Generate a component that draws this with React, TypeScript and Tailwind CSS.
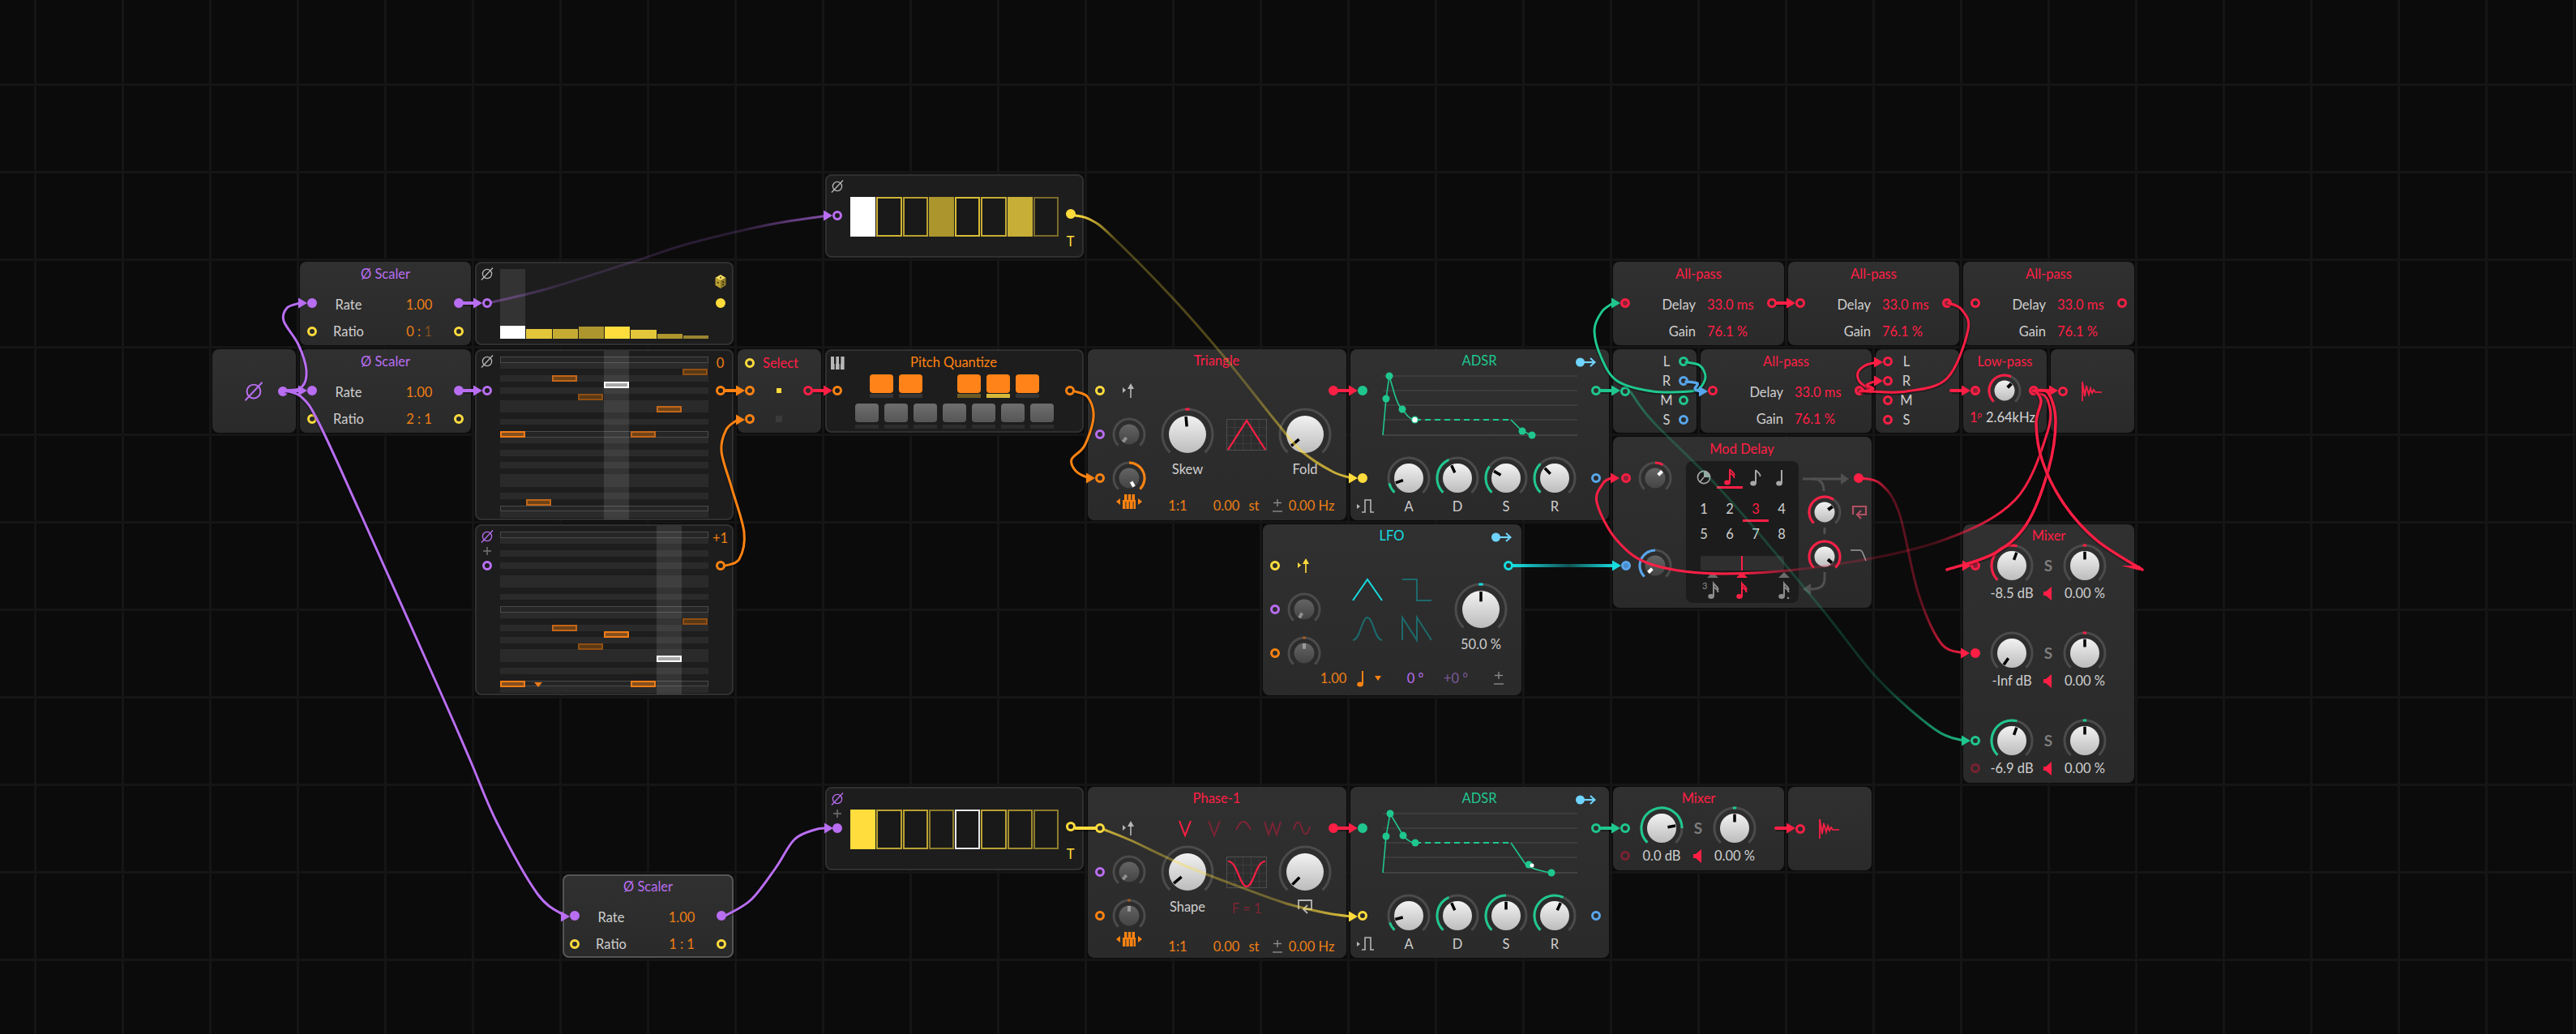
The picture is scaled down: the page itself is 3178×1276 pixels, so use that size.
import React from "react";

const RED = "#ff1f45", GRN = "#1fc78f", BLU = "#58a6ec", PUR = "#b96ef2", ORG = "#ff8312", YEL = "#ffdc3c", CYA = "#17dde0";

type PortKind = "red" | "redMid" | "redFill" | "redDim" | "grn" | "grnFill" | "blu" | "bluFill" | "pur" | "purFill" | "org" | "yel" | "yelFill" | "cya";
const PORT: Record<PortKind, string> = {
  red: "border-[#ff1f45]",
  redMid: "border-[#ff1f45] bg-[#8a2236]",
  redFill: "border-[#ff1f45] bg-[#ff1f45]",
  redDim: "border-[#7a2232]",
  grn: "border-[#1fc78f]",
  grnFill: "border-[#1fc78f] bg-[#1fc78f]",
  blu: "border-[#58a6ec]",
  bluFill: "border-[#58a6ec] bg-[#4a8dca]",
  pur: "border-[#b96ef2]",
  purFill: "border-[#b96ef2] bg-[#b96ef2]",
  org: "border-[#ff8312]",
  yel: "border-[#ffdc3c]",
  yelFill: "border-[#ffdc3c] bg-[#ffdc3c]",
  cya: "border-[#17dde0]",
};

const Port = ({ k }: { k: PortKind }) => (
  <span className={"block h-[12px] w-[12px] shrink-0 rounded-full border-[3px] " + PORT[k]} />
);
const PortCell = ({ k, className = "w-[30px]" }: { k: PortKind; className?: string }) => (
  <div className={"flex shrink-0 items-center justify-center " + className}>
    <Port k={k} />
  </div>
);

const Node = ({ c, r, w, h, dark, className = "", children }: { c: number; r: number; w: number; h: number; dark?: boolean; className?: string; children?: React.ReactNode }) => (
  <div
    className={
      "absolute rounded-[8px] " +
      (dark ? "bg-[#1d1d1d] shadow-[inset_0_0_0_2px_#303030] " : "bg-linear-to-b from-[#303030] to-[#2a2a2a] ") +
      className
    }
    style={{ left: 262 + 108 * c, top: 215 + 108 * r, width: 108 * w - 5, height: 108 * h - 5 }}
  >
    {children}
  </div>
);

const rad = (a: number) => (a * Math.PI) / 180;
const pol = (c: number, r: number, a: number): [number, number] => [c + r * Math.sin(rad(a)), c - r * Math.cos(rad(a))];
const arcD = (c: number, r: number, a0: number, a1: number) => {
  const [x0, y0] = pol(c, r, a0);
  const [x1, y1] = pol(c, r, a1);
  return `M${x0.toFixed(2)} ${y0.toFixed(2)}A${r} ${r} 0 ${a1 - a0 > 180 ? 1 : 0} 1 ${x1.toFixed(2)} ${y1.toFixed(2)}`;
};

const KN = { L: [66, 46], M: [54, 36], S: [42, 25] } as const;
const Knob = ({ s = "M", a, arc, col = RED, tick, dark, pc }: { s?: "L" | "M" | "S"; a: number; arc?: [number, number]; col?: string; tick?: string; dark?: boolean; pc?: string }) => {
  const [d, kd] = KN[s];
  const c = d / 2;
  const tr = c - 2;
  const kr = kd / 2;
  const [x0, y0] = pol(c, kr * 0.42, a);
  const [x1, y1] = pol(c, kr * 0.96, a);
  return (
    <svg width={d} height={d} className="block shrink-0">
      <path d={arcD(c, tr, -136, 136)} fill="none" stroke="#4b4b4b" strokeWidth={3} />
      {arc && <path d={arcD(c, tr, arc[0], arc[1])} fill="none" stroke={col} strokeWidth={3} />}
      {tick && <path d={arcD(c, tr, -5, 5)} fill="none" stroke={tick} strokeWidth={3} />}
      <circle cx={c} cy={c} r={kr} fill={dark ? "url(#kd)" : "url(#kl)"} />
      <line x1={x0} y1={y0} x2={x1} y2={y1} stroke={pc || (dark ? "#ffffff" : "#000000")} strokeWidth={s === "S" ? 4 : 3.5} />
    </svg>
  );
};

const Phi = ({ col = "#b8b8b8", z = 16 }: { col?: string; z?: number }) => (
  <svg width={z} height={z} viewBox="0 0 16 16" className="block shrink-0" fill="none" stroke={col} strokeWidth={1.3}>
    <circle cx="8" cy="8" r="5.6" />
    <line x1="1" y1="15.5" x2="15" y2="0.5" />
  </svg>
);
const Plus = () => (
  <svg width="10" height="10" className="block" stroke="#6e6e6e" strokeWidth="1.6">
    <line x1="5" y1="0" x2="5" y2="10" />
    <line x1="0" y1="5" x2="10" y2="5" />
  </svg>
);
const Retrig = ({ col = "#b5b5b5" }: { col?: string }) => (
  <svg width="16" height="18" className="block" fill={col}>
    <polygon points="0,5 4,8.5 0,12" />
    <polygon points="10,0 14,7 6,7" />
    <rect x="9.2" y="6" width="1.6" height="12" />
  </svg>
);
const GateIcon = () => (
  <svg width="22" height="18" fill="none" className="block">
    <polygon points="0,6 4,9 0,12" fill="#b5b5b5" />
    <path d="M6 16H10V1H17V16H21" stroke="#b5b5b5" strokeWidth="1.6" />
  </svg>
);
const KeysIcon = () => (
  <svg width="32" height="18" className="block" fill={ORG}>
    <polygon points="0,9 5,5 5,13" />
    <polygon points="32,9 27,5 27,13" />
    <rect x="8" y="7" width="16" height="11" />
    <rect x="10" y="0" width="3.4" height="11" />
    <rect x="14.8" y="0" width="3.4" height="11" />
    <rect x="19.6" y="0" width="3.4" height="11" />
    <rect x="11.4" y="9" width="1" height="9" fill="#2d2d2d" />
    <rect x="15.8" y="9" width="1" height="9" fill="#2d2d2d" />
    <rect x="20.6" y="9" width="1" height="9" fill="#2d2d2d" />
  </svg>
);
const PlusMinus = ({ col = "#8c8c8c" }: { col?: string }) => (
  <svg width="14" height="17" stroke={col} strokeWidth="1.4" className="block">
    <line x1="7" y1="0" x2="7" y2="9" />
    <line x1="2" y1="4.5" x2="12" y2="4.5" />
    <line x1="1" y1="15" x2="13" y2="15" />
  </svg>
);
const OutArrow = () => (
  <svg width="26" height="14" className="block" fill="none" stroke="#6fd4ff">
    <circle cx="6.5" cy="7" r="5.5" fill="#6fd4ff" stroke="none" />
    <line x1="10" y1="7" x2="24" y2="7" strokeWidth="2.2" />
    <path d="M19 2L24.5 7L19 12" strokeWidth="2" />
    <line x1="25" y1="1" x2="25" y2="13" strokeWidth="0" />
  </svg>
);
const Speaker = () => (
  <svg width="12" height="17" className="block" fill={RED}>
    <polygon points="10,0 10,17 3,11 0,11 0,6 3,6" />
  </svg>
);
const Decay = () => (
  <svg width="26" height="26" fill="none" stroke={RED} strokeWidth="1.7" className="block">
    <path d="M1 25V1L4 19L6 6L9 17L11 9L13 15L15 11L17 14H25" />
  </svg>
);
const Piano = () => (
  <svg width="17" height="16" className="block" fill="#b8b8b8">
    <rect x="0" y="0" width="4.6" height="16" />
    <rect x="6" y="0" width="4.6" height="16" />
    <rect x="12" y="0" width="4.6" height="16" />
    <rect x="4" y="0" width="2.4" height="9" fill="#1d1d1d" />
    <rect x="10" y="0" width="2.4" height="9" fill="#1d1d1d" />
  </svg>
);
const Dice = () => (
  <svg width="16" height="17" viewBox="0 0 18 21" className="block">
    <polygon points="9,0 17,4.5 9,9 1,4.5" fill="#ffe061" />
    <polygon points="1,4.5 9,9 9,21 1,16" fill="#b99f33" />
    <polygon points="17,4.5 9,9 9,21 17,16" fill="#8f7a28" />
    <circle cx="9" cy="4.5" r="1.3" fill="#5f5118" />
    <circle cx="5" cy="12" r="1.2" fill="#2e2708" />
    <circle cx="13" cy="11" r="1.2" fill="#2e2708" />
    <circle cx="13" cy="15" r="1.2" fill="#2e2708" />
  </svg>
);
const Note = ({ flags = 0, col = "#a8a8a8", dot }: { flags?: number; col?: string; dot?: boolean }) => (
  <svg width="18" height="24" className="block" fill="none" stroke={col} strokeWidth="2">
    <ellipse cx="6" cy="19.5" rx="3.8" ry="3" fill={col} stroke="none" />
    <line x1="9" y1="19" x2="9" y2="3" />
    {flags > 0 && <path d="M9 3C11 6 15 7 14.5 11" strokeWidth="1.8" />}
    {flags > 1 && <path d="M9 7C11 10 15 10 14.5 14" strokeWidth="1.6" />}
    {dot && <circle cx="15" cy="21" r="1.3" fill={col} stroke="none" />}
  </svg>
);

const T = "text-[16.5px] leading-[20px] whitespace-nowrap";

const Title = ({ className, children, h = "h-[28px]" }: { className: string; children: React.ReactNode; h?: string }) => (
  <div className={"flex items-center justify-center " + h + " " + T + " " + className}>{children}</div>
);

/* ---------------- simple modules ---------------- */
const Scaler = ({ c, r, ratio, dim, outline }: { c: number; r: number; ratio: React.ReactNode; dim?: boolean; outline?: boolean }) => (
  <Node c={c} r={r} w={2} h={1} className={outline ? "shadow-[inset_0_0_0_2px_#555]" : ""}>
    <Title h="h-[33px]" className="pb-[4px] text-[#b96ef2]">Ø Scaler</Title>
    <div className="flex h-[36px] items-center">
      <PortCell k="purFill" />
      <div className={"mt-[3px] w-[60px] text-center text-[#cfcfcf] " + T}>Rate</div>
      <div className={"ml-[27px] mt-[3px] w-[60px] text-center text-[#ed7f16] " + T}>1.00</div>
      <PortCell k={dim ? "pur" : "purFill"} className="ml-auto w-[30px]" />
    </div>
    <div className="flex h-[34px] items-center">
      <PortCell k="yel" />
      <div className={"w-[60px] text-center text-[#cfcfcf] " + T}>Ratio</div>
      <div className={"ml-[27px] w-[60px] text-center text-[#ed7f16] " + T}>{ratio}</div>
      <PortCell k="yel" className="ml-auto w-[30px]" />
    </div>
  </Node>
);

const rowKind = (i: number) => {
  const m = i % 12;
  if (m === 0) return "box";
  return [1, 3, 5, 7, 8, 10].includes(m) ? "stripe" : "none";
};
const ROWS = Array.from({ length: 26 }, (_, i) => i);
type N = { c: number; r: number; s: "hi" | "mid" | "lo" | "w" };
const NOTE: Record<N["s"], string> = {
  hi: "border-[#ef7c18] bg-[#85501e]",
  mid: "border-[#c2661a] bg-[#704317]",
  lo: "border-[#8f4f14] bg-[#5a3814]",
  w: "border-white bg-[#a9a9a9]",
};
const Roll = ({ notes, play, marker }: { notes: N[]; play: number; marker?: boolean }) => (
  <div className="relative mt-[9px] h-[199px] w-[257px] shrink-0">
    {ROWS.map((i) => (
      <div
        key={i}
        className={
          "h-[7.667px] " +
          (rowKind(i) === "stripe" ? "bg-[#2a2a2a]" : rowKind(i) === "box" ? "border border-[#4a4a4a] bg-[#252525]" : "")
        }
      />
    ))}
    <div className="absolute top-[-7px] bottom-[-2px] w-[31px] bg-white/10" style={{ left: play * 32.1 }} />
    {notes.map((n, i) => (
      <div
        key={i}
        className={"absolute h-[8px] w-[31px] border-2 " + NOTE[n.s]}
        style={{ left: n.c * 32.1, top: n.r * 7.667 }}
      />
    ))}
    {marker && (
      <svg width="10" height="6" className="absolute left-[42px] top-[186px]">
        <polygon points="0,0 10,0 5,6" fill="#e87a1a" />
      </svg>
    )}
  </div>
);

const Side = ({ phi, plus, port }: { phi: string; plus?: boolean; port: PortKind }) => (
  <div className="flex w-[31px] shrink-0 flex-col items-center pr-[1px]">
    <div className="flex h-[30px] items-center"><Phi col={phi} /></div>
    <div className="flex h-[6px] items-center">{plus && <Plus />}</div>
    <div className="flex h-[30px] items-center"><Port k={port} /></div>
  </div>
);

const NoteSeq = ({ c, r, label, phi, plus, inPort, notes, play, marker }: { c: number; r: number; label: string; phi: string; plus?: boolean; inPort: PortKind; notes: N[]; play: number; marker?: boolean }) => (
  <Node c={c} r={r} w={3} h={2} dark className="flex">
    <Side phi={phi} plus={plus} port={inPort} />
    <Roll notes={notes} play={play} marker={marker} />
    <div className="flex w-[29px] flex-col items-center">
      <div className={"flex h-[33px] items-center text-[#ed7f16] " + T}>{label}</div>
      <div className="flex h-[6px]" />
      <div className="-mt-[3px] flex h-[30px] items-center"><Port k="org" /></div>
    </div>
  </Node>
);

const BARS = [
  { h: 16, c: "bg-white" }, { h: 12, c: "bg-[#e3c63a]" }, { h: 12, c: "bg-[#c6ab33]" }, { h: 15, c: "bg-[#ad962e]" },
  { h: 15, c: "bg-[#ffdd3c]" }, { h: 11, c: "bg-[#e3c63a]" }, { h: 6, c: "bg-[#ad962e]" }, { h: 4, c: "bg-[#998530]" },
];
const ModSeq = () => (
  <Node c={3} r={1} w={3} h={1} dark className="flex">
    <Side phi="#b8b8b8" port="pur" />
    <div className="mt-[9px] flex h-[86px] w-[257px] shrink-0 items-end gap-[1px]">
      {BARS.map((b, i) => (
        <div key={i} className={"flex h-full flex-1 items-end " + (i === 0 ? "bg-[#333333]" : "")}>
          <div className={"w-full " + b.c} style={{ height: b.h }} />
        </div>
      ))}
    </div>
    <div className="flex w-[29px] flex-col items-center">
      <div className="flex h-[36px] items-center pt-[12px]"><Dice /></div>
      <div className="flex h-[30px] items-center"><Port k="yelFill" /></div>
    </div>
  </Node>
);

type Step = { f?: string; b?: string };
const StepSeq = ({ c, r, phi, plus, inPort, outPort, steps }: { c: number; r: number; phi: string; plus?: boolean; inPort: PortKind; outPort: PortKind; steps: Step[] }) => (
  <Node c={c} r={r} w={3} h={1} dark className="flex">
    <Side phi={phi} plus={plus} port={inPort} />
    <div className="mt-[28px] flex h-[49px] w-[257px] shrink-0 gap-[1px]">
      {steps.map((s, i) => (
        <div key={i} className="flex-1 border-2 bg-[#191919]" style={{ background: s.f, borderColor: s.b || s.f }} />
      ))}
    </div>
    <div className="flex w-[29px] flex-col items-center">
      <div className="h-[36px]" />
      <div className="flex h-[30px] items-center"><Port k={outPort} /></div>
      <div className={"flex h-[42px] items-center text-[#ffdc3c] " + T}>T</div>
    </div>
  </Node>
);

const Select = () => (
  <Node c={6} r={2} w={1} h={1}>
    <div className="flex h-[33px] items-center">
      <PortCell k="yel" />
      <div className={"w-[46px] text-center text-[#ff1f45] " + T}>Select</div>
    </div>
    <div className="flex h-[36px] items-center">
      <PortCell k="org" />
      <div className="flex w-[42px] justify-center"><span className="h-[6px] w-[6px] bg-[#ffdc3c]" /></div>
      <PortCell k="red" />
    </div>
    <div className="flex h-[34px] items-center">
      <PortCell k="org" />
      <div className="flex w-[42px] justify-center"><span className="h-[8px] w-[8px] bg-[#3a3a3a]" /></div>
    </div>
  </Node>
);

const PitchQ = () => {
  const on = [0, 1, -1, 3, 4, 5];
  const ind = ["bg-[#353535]", "bg-[#353535]", "", "bg-[#6b5a25]", "bg-[#d4b83a]", "bg-[#353535]"];
  return (
    <Node c={7} r={2} w={3} h={1} dark className="grid grid-cols-[30px_257px_30px] grid-rows-[31px_72px]">
      <div className="col-start-1 row-start-1 flex items-center justify-center pt-[2px]"><Piano /></div>
      <Title h="h-[31px]" className="col-span-3 col-start-1 row-start-1 text-[#ff8312]">Pitch Quantize</Title>
      <div className="col-start-1 row-start-2 flex h-[40px] items-center justify-center"><Port k="org" /></div>
      <div className="col-start-2 row-start-2 flex flex-col">
        <div className="flex gap-[7px] pl-[25px]">
          {on.map((v, i) => (
            <div key={i} className="flex w-[29px] flex-col gap-[1px]">
              <div className={"h-[23px] rounded-[4px] " + (v < 0 ? "" : "bg-[#ff8318]")} />
              <div className={"h-[5px] " + ind[i]} />
            </div>
          ))}
        </div>
        <div className="mt-[7px] flex gap-[7px] pl-[7px]">
          {[0, 1, 2, 3, 4, 5, 6].map((i) => (
            <div key={i} className="flex w-[29px] flex-col gap-[3px]">
              <div className="h-[23px] rounded-[4px] bg-linear-to-b from-[#6e6e6e] to-[#565656]" />
              <div className="h-[5px] bg-[#2c2c2c]" />
            </div>
          ))}
        </div>
      </div>
      <div className="col-start-3 row-start-2 flex h-[40px] items-center justify-center"><Port k="org" /></div>
    </Node>
  );
};

const LeftBank = ({ a, b, top, keys }: { a: React.ReactNode; b: React.ReactNode; top: PortKind; keys?: boolean }) => (
  <div className="row-span-4 row-start-2 flex w-[72px] flex-col">
    <div className="flex h-[54px] items-center">
      <PortCell k={top} />
      <div className="flex w-[42px] justify-center"><Retrig col={keys ? "#b5b5b5" : YEL} /></div>
    </div>
    <div className="flex h-[54px] items-center">
      <PortCell k="pur" />
      {a}
    </div>
    <div className="flex h-[54px] items-center">
      <PortCell k="org" />
      {b}
    </div>
    {keys && <div className="-mt-[7px] flex h-[24px] justify-center pl-[30px]"><KeysIcon /></div>}
  </div>
);

const OscFoot = () => (
  <div className={"flex h-[18px] items-center text-[#ed7f16] " + T}>
    <div className="w-[78px] text-center">1:1</div>
    <div className="w-[42px] text-center">0.00</div>
    <div className="ml-[3px] w-[20px] text-center">st</div>
    <div className="ml-[10px] flex w-[18px] justify-center"><PlusMinus /></div>
    <div className="w-[66px] text-center">0.00 Hz</div>
  </div>
);

const Grid = ({ id }: { id: string }) => (
  <pattern id={id} width="10" height="10" patternUnits="userSpaceOnUse">
    <path d="M10 0H0V10" fill="none" stroke="#4a4a4a" strokeWidth="1" />
  </pattern>
);
const Shape = ({ d }: { d: string }) => (
  <svg width="50" height="40" fill="none" className="block">
    <rect x="0.5" y="0.5" width="49" height="38" fill="url(#gr)" stroke="#4f4f4f" />
    <path d={d} stroke={RED} strokeWidth="2.2" />
  </svg>
);

const Osc = ({ r, title, wave, sel, knobA, knobB, labelL, mid, right }: { r: number; title: string; wave: string; sel?: boolean; knobA: number; knobB: number; labelL: string; mid?: React.ReactNode; right: React.ReactNode }) => (
  <Node c={10} r={r} w={3} h={2} className="grid grid-cols-[72px_246px] grid-rows-[24px_54px_54px_54px_1fr]">
    <Title className="col-span-2 text-[#ff1f45]">{title}</Title>
    <LeftBank
      top="yel"
      keys
      a={<div className="flex w-[42px] justify-center"><Knob s="S" a={-140} dark pc="#8f8f8f" /></div>}
      b={sel
        ? <div className="flex w-[42px] justify-center"><Knob s="S" a={0} dark pc="#9a9a9a" tick="#a55c20" /></div>
        : <div className="flex w-[42px] justify-center"><Knob s="S" a={150} dark arc={[0, 135]} col={ORG} /></div>}
    />
    <div className="col-start-2 row-span-4 row-start-2 flex flex-col">
      <div className="flex h-[54px] items-center">
        {sel && (
          <div className="flex pl-[30px]">
            {[
              ["M5 3L12 21L19 3", RED],
              ["M5 3L12 21L19 3", "#7c2435"],
              ["M3 14C7 6 9 4 12 4C15 4 17 6 21 14", "#7c2435"],
              ["M2 4L7 20L12 6L17 20L22 4", "#7c2435"],
              ["M2 14C5 2 9 2 12 12C15 22 19 22 22 10", "#7c2435"],
            ].map(([d, c], i) => (
              <div key={i} className="flex w-[36px] justify-center">
                <svg width="24" height="24" fill="none" stroke={c} strokeWidth="2" className="block"><path d={d} /></svg>
              </div>
            ))}
          </div>
        )}
        <PortCell k="redFill" className="ml-auto w-[30px]" />
      </div>
      <div className="-mt-[6px] flex">
        <div className="ml-[18px] flex w-[66px] flex-col items-center">
          <Knob s="L" a={knobA} tick={sel ? undefined : RED} />
          <div className={"text-[#cfcfcf] " + T}>{labelL}</div>
        </div>
        <div className="ml-[15px] flex w-[50px] flex-col items-center">
          <div className="mt-[14px]"><Shape d={wave} /></div>
          <div className="mt-[12px]">{mid}</div>
        </div>
        <div className="ml-[14px] flex w-[66px] flex-col items-center">
          <Knob s="L" a={knobB} />
          <div className={"text-[#cfcfcf] " + T}>{right}</div>
        </div>
      </div>
      <div className="mt-[26px]"><OscFoot /></div>
    </div>
  </Node>
);

const Env = ({ curve, pts, dash, white, line }: { curve: string; pts: [number, number][]; dash: string; white: [number, number]; line: string }) => (
  <svg width="258" height="108" fill="none" className="block">
    {[9, 27, 45, 63].map((y) => <line key={y} x1="10" x2="250" y1={y} y2={y} stroke="#4b4b4b" strokeWidth="1.2" />)}
    <line x1="10" x2="250" y1="82" y2="82" stroke="#5a5a5a" strokeWidth="1.2" />
    <path d={line} stroke={GRN} strokeWidth="1.6" />
    <path d={curve} stroke={GRN} strokeWidth="1.6" />
    <path d={dash} stroke={GRN} strokeWidth="2" strokeDasharray="7 5" />
    {pts.map(([x, y], i) => <circle key={i} cx={x} cy={y} r="4.5" fill={GRN} />)}
    <circle cx={white[0]} cy={white[1]} r={white[1] > 70 ? 2.5 : 3.2} fill="#fff" />
  </svg>
);

const Adsr = ({ r, env, knobs, bPort }: { r: number; env: React.ReactNode; knobs: { a: number; t: number }[]; bPort?: PortKind }) => (
  <Node c={13} r={r} w={3} h={2} className="grid grid-cols-[30px_258px_30px] grid-rows-[24px_54px_54px_54px_1fr]">
    <div className="col-span-3 flex">
      <div className="w-[54px]" />
      <Title className="flex-1 text-[#1fc78f]">ADSR</Title>
      <div className="flex w-[54px] justify-end pr-[15px] pt-[9px]"><OutArrow /></div>
    </div>
    <PortCell k="grnFill" className="col-start-1 row-start-2 w-[30px]" />
    <div className="col-start-2 row-span-2 row-start-2">{env}</div>
    <PortCell k="grn" className="col-start-3 row-start-2 w-[30px]" />
    <PortCell k={bPort || "yelFill"} className="col-start-1 row-start-4 w-[30px]" />
    <div className="col-start-2 row-start-4 flex items-center pl-[12px]">
      {knobs.map((k, i) => (
        <div key={i} className="flex w-[60px] justify-center"><Knob a={k.a} arc={[-135, k.t]} col={GRN} /></div>
      ))}
    </div>
    <PortCell k="blu" className="col-start-3 row-start-4 w-[30px]" />
    <div className={"col-span-3 row-start-5 -mt-[2px] flex h-[20px] items-center text-[#cfcfcf] " + T}>
      <div className="ml-[8px] w-[34px]"><GateIcon /></div>
      {["A", "D", "S", "R"].map((l) => <div key={l} className="w-[60px] text-center">{l}</div>)}
    </div>
  </Node>
);

const AllPass = ({ c, r, inP, outP }: { c: number; r: number; inP: PortKind; outP?: PortKind }) => (
  <Node c={c} r={r} w={2} h={1}>
    <Title h="h-[33px]" className="pb-[4px] text-[#ff1f45]">All-pass</Title>
    <div className="flex h-[36px] items-center">
      <PortCell k={inP} />
      <div className={"mt-[3px] w-[72px] text-right text-[#cfcfcf] " + T}>Delay</div>
      <div className={"ml-[14px] mt-[3px] text-[#ff1f45] " + T}>33.0 ms</div>
      <PortCell k={outP || "red"} className="ml-auto w-[30px]" />
    </div>
    <div className="flex h-[34px] items-center">
      <div className="w-[30px]" />
      <div className={"w-[72px] text-right text-[#cfcfcf] " + T}>Gain</div>
      <div className={"ml-[14px] text-[#ff1f45] " + T}>76.1 %</div>
    </div>
  </Node>
);

const Split = () => (
  <Node c={16} r={2} w={1} h={1} className="flex">
    <div className="flex w-[30px] items-center justify-center"><Port k="grn" /></div>
    <div className="flex flex-col pt-[3px]">
      {([["L", "grn"], ["R", "blu"], ["M", "grn"], ["S", "blu"]] as [string, PortKind][]).map(([l, p]) => (
        <div key={l} className="flex h-[24px] items-center">
          <div className={"ml-[26px] w-[20px] text-center text-[#cfcfcf] " + T}>{l}</div>
          <PortCell k={p} className="w-[22px]" />
        </div>
      ))}
    </div>
  </Node>
);
const Merge = () => (
  <Node c={19} r={2} w={1} h={1}>
    <div className="flex flex-col pt-[3px]">
      {["L", "R", "M", "S"].map((l) => (
        <div key={l} className="flex h-[24px] items-center">
          <PortCell k="red" />
          <div className={"w-[16px] text-center text-[#cfcfcf] " + T}>{l}</div>
        </div>
      ))}
    </div>
  </Node>
);
const LowPass = () => (
  <Node c={20} r={2} w={1} h={1}>
    <Title h="h-[30px]" className="text-[#ff1f45]">Low-pass</Title>
    <div className="flex h-[42px] items-center">
      <PortCell k="redMid" />
      <div className="flex w-[42px] justify-center"><Knob s="S" a={45} arc={[-135, 25]} /></div>
      <PortCell k="redMid" />
    </div>
    <div className={"mt-[1px] flex h-[22px] items-center whitespace-nowrap pl-[8px] " + T}>
      <span className="text-[#ff1f45]">1<sup className="text-[9px]">P</sup></span>
      <span className="ml-[5px] text-[#d5d5d5]">2.64kHz</span>
    </div>
  </Node>
);
const Out = ({ c, r }: { c: number; r: number }) => (
  <Node c={c} r={r} w={1} h={1} className="flex items-center">
    <PortCell k="red" />
    <div className="ml-[8px]"><Decay /></div>
  </Node>
);

const MixRow = ({ inP, a, arc, col, tick, db, dim }: { inP: PortKind; a: number; arc?: [number, number]; col: string; tick: string; db: string; dim?: boolean }) => (
  <>
    <div className="flex h-[54px] items-center">
      <PortCell k={inP} />
      <div className="flex w-[60px] justify-center"><Knob a={a} arc={arc} col={col} /></div>
      <div className="flex w-[30px] justify-center text-[19px] font-bold text-[#7d7d7d]">S</div>
      <div className="flex w-[60px] justify-center"><Knob a={0} tick={tick} /></div>
    </div>
    <div className={"flex h-[14px] items-center text-[#cfcfcf] " + T}>
      {dim ? <PortCell k="redDim" /> : <div className="w-[30px]" />}
      <div className="flex w-[60px] justify-center">{db}</div>
      <div className="flex w-[30px] justify-center"><Speaker /></div>
      <div className="flex w-[60px] justify-center">0.00 %</div>
    </div>
  </>
);

const Mixer3 = () => (
  <Node c={20} r={4} w={2} h={3}>
    <Title h="h-[24px]" className="pt-[4px] text-[#ff1f45]">Mixer</Title>
    <MixRow inP="redMid" a={20} arc={[-135, 15]} col={RED} tick={RED} db="-8.5 dB" />
    <div className="h-[40px]" />
    <MixRow inP="redFill" a={-145} col={RED} tick={RED} db="-Inf dB" />
    <div className="h-[40px]" />
    <MixRow inP="grn" a={20} arc={[-135, 15]} col={GRN} tick={GRN} db="-6.9 dB" dim />
  </Node>
);
const Mixer1 = () => (
  <Node c={16} r={7} w={2} h={1}>
    <Title h="h-[24px]" className="pt-[4px] text-[#ff1f45]">Mixer</Title>
    <MixRow inP="grn" a={80} arc={[-135, 90]} col={GRN} tick={GRN} db="0.0 dB" dim />
  </Node>
);

const ModDelay = () => (
  <Node c={16} r={3} w={3} h={2} className="grid grid-cols-[32px_40px_18px_139px_89px] grid-rows-[30px_175px]">
    <Title h="h-[30px]" className="col-span-5 text-[#ff1f45]">Mod Delay</Title>
    <div className="col-span-2 row-start-2 flex flex-col">
      <div className="flex h-[42px] items-center">
        <PortCell k="redMid" className="w-[32px]" />
        <div className="flex w-[40px] justify-center"><Knob s="S" a={45} dark arc={[0, 30]} /></div>
      </div>
      <div className="h-[66px]" />
      <div className="flex h-[42px] items-center">
        <PortCell k="bluFill" className="w-[32px]" />
        <div className="flex w-[40px] justify-center"><Knob s="S" a={-135} dark arc={[-135, 0]} col={BLU} /></div>
      </div>
    </div>
    <div className="col-start-4 row-start-2 flex flex-col rounded-[8px] bg-[#1c1c1c]">
      <div className={"mt-[6px] grid h-[31px] grid-cols-[32px_32px_32px_32px] pl-[6px]"}>
        <div className="flex items-center justify-center">
          <svg width="18" height="18" fill="none" stroke="#a8a8a8" strokeWidth="1.6" className="block">
            <circle cx="9" cy="9" r="7.6" />
            <path d="M9 1.4A7.6 7.6 0 0 1 16.6 9H9Z" fill="#a8a8a8" stroke="none" />
            <line x1="9" y1="9" x2="4" y2="15" />
          </svg>
        </div>
        <div className="flex items-center justify-center border-b-[3px] border-[#ff1f45]"><Note flags={2} col={RED} /></div>
        <div className="flex items-center justify-center"><Note flags={1} /></div>
        <div className="flex items-center justify-center"><Note /></div>
      </div>
      <div className={"mt-[12px] grid h-[28px] grid-cols-[32px_32px_32px_32px] pl-[6px] text-center leading-[26px] text-[#cfcfcf] " + "text-[16.5px]"}>
        <div>1</div><div>2</div><div className="border-b-[3px] border-[#ff1f45] text-[#ff1f45]">3</div><div>4</div>
      </div>
      <div className="mt-[2px] grid h-[28px] grid-cols-[32px_32px_32px_32px] pl-[6px] text-center text-[16.5px] leading-[28px] text-[#cfcfcf]">
        <div>5</div><div>6</div><div>7</div><div>8</div>
      </div>
      <div className="relative ml-[18px] mt-[13px] h-[19px] w-[103px] rounded-[2px] bg-[#2f2f2f]">
        <div className="absolute left-[50px] top-0 h-full w-[2px] bg-[#ff1f45]" />
      </div>
      <svg width="139" height="42" className="mt-[2px] block" fill="#6b6b6b">
        <polygon points="33,0 40,7 26,7" />
        <polygon points="69,0 76,7 62,7" fill={RED} />
        <polygon points="121,0 128,7 114,7" />
        <text x="20" y="21" fontSize="11" fill="#8c8c8c">3</text>
        <g transform="translate(25 11)" fill="none" stroke="#8c8c8c" strokeWidth="2">
          <ellipse cx="6" cy="19" rx="3.8" ry="3" fill="#8c8c8c" stroke="none" />
          <path d="M9 19V3C11 6 15 7 14.5 11M9 7C11 10 15 10 14.5 14" />
        </g>
        <g transform="translate(60 11)" fill="none" stroke={RED} strokeWidth="2">
          <ellipse cx="6" cy="19" rx="3.8" ry="3" fill={RED} stroke="none" />
          <path d="M9 19V3C11 6 15 7 14.5 11M9 7C11 10 15 10 14.5 14" />
        </g>
        <g transform="translate(112 11)" fill="none" stroke="#8c8c8c" strokeWidth="2">
          <ellipse cx="6" cy="19" rx="3.8" ry="3" fill="#8c8c8c" stroke="none" />
          <path d="M9 19V3C11 6 15 7 14.5 11M9 7C11 10 15 10 14.5 14" />
          <circle cx="14" cy="21" r="1.3" fill="#8c8c8c" stroke="none" />
        </g>
      </svg>
    </div>
    <div className="relative col-start-5 row-start-2 -mt-[30px] flex">
      <svg width="89" height="205" fill="none" stroke="#505050" strokeWidth="3" className="absolute left-0 top-0">
        <path d="M5 52H18Q31 52 31 67" />
        <path d="M18 52H52" />
        <polygon points="52,45 62,52 52,59" fill="#505050" stroke="none" />
        <path d="M32 112V120" />
        <path d="M32 167V175Q32 188 16 188H10" />
        <polygon points="15,181 5,188 15,195" fill="#505050" stroke="none" />
      </svg>
      <div className="relative flex w-[64px] flex-col items-center pt-[72px]">
        <Knob s="S" a={55} arc={[-135, 35]} />
        <div className="h-[13px]" />
        <Knob s="S" a={130} arc={[-135, 135]} />
      </div>
      <div className="relative flex w-[20px] flex-col items-center pt-[30px]">
        <div className="flex h-[42px] items-center"><Port k="redFill" /></div>
        <div className="flex h-[42px] items-center">
          <svg width="22" height="20" fill="none" stroke="#b34f63" strokeWidth="2.2" className="block">
            <path d="M4 13V3H20V13H10" />
            <path d="M14 8L9 13L14 18" />
          </svg>
        </div>
        <div className="h-[12px]" />
        <div className="flex h-[40px] items-center">
          <svg width="22" height="16" fill="none" stroke="#9a9a9a" strokeWidth="1.6" className="block"><path d="M1 2H13C16 2 17 9 20 15" /></svg>
        </div>
      </div>
    </div>
  </Node>
);

const Lfo = () => (
  <Node c={12} r={4} w={3} h={2} className="grid grid-cols-[72px_246px] grid-rows-[24px_54px_54px_54px_1fr]">
    <div className="col-span-2 flex">
      <div className="w-[54px]" />
      <Title className="flex-1 text-[#17dde0]">LFO</Title>
      <div className="flex w-[54px] justify-end pr-[11px] pt-[9px]"><OutArrow /></div>
    </div>
    <LeftBank
      top="yel"
      a={<div className="flex w-[42px] justify-center"><Knob s="S" a={-150} dark pc="#8f8f8f" /></div>}
      b={<div className="flex w-[42px] justify-center"><Knob s="S" a={0} dark pc="#9a9a9a" tick="#a55c20" /></div>}
    />
    <div className="col-start-2 row-span-4 row-start-2 flex flex-col">
      <div className="flex h-[54px] items-center"><PortCell k="cya" className="ml-auto w-[30px]" /></div>
      <div className="-mt-[14px] flex">
        <svg width="164" height="94" fill="none" strokeWidth="2" className="block">
          <path d="M39 30L57 4L75 30" stroke={CYA} />
          <path d="M100 4H118V30H136" stroke="#1c6a6c" />
          <path d="M39 79C48 79 50 51 57 51C64 51 66 79 75 79" stroke="#1c6a6c" />
          <path d="M100 79V51L118 79V51L136 79" stroke="#1c6a6c" />
        </svg>
        <div className="flex w-[66px] flex-col items-center pt-[8px]">
          <Knob s="L" a={0} tick={CYA} />
          <div className={"text-[#cfcfcf] " + T}>50.0 %</div>
        </div>
      </div>
      <div className={"mt-[23px] flex h-[18px] items-center " + T}>
        <div className="-ml-[2px] w-[34px] text-center text-[#ed7f16]">1.00</div>
        <div className="ml-[10px]"><Note col={ORG} /></div>
        <svg width="8" height="6" className="ml-[6px] block"><polygon points="0,0 8,0 4,6" fill={ORG} /></svg>
        <div className="ml-[27px] w-[30px] text-center text-[#b96ef2]">0 °</div>
        <div className="ml-[18px] w-[34px] text-center text-[#7a5a98]">+0 °</div>
        <div className="ml-[29px]"><PlusMinus /></div>
      </div>
    </div>
  </Node>
);

/* ---------------- wires ---------------- */
type P = [number, number];
const smooth = (p: P[]) => {
  if (p.length === 2) return `M${p[0][0]} ${p[0][1]}L${p[1][0]} ${p[1][1]}`;
  let d = `M${p[0][0]} ${p[0][1]}`;
  for (let i = 0; i < p.length - 1; i++) {
    const a = p[Math.max(0, i - 1)], b = p[i], c = p[i + 1], e = p[Math.min(p.length - 1, i + 2)];
    const c1 = [b[0] + (c[0] - a[0]) / 6, b[1] + (c[1] - a[1]) / 6];
    const c2 = [c[0] - (e[0] - b[0]) / 6, c[1] - (e[1] - b[1]) / 6];
    d += `C${c1[0].toFixed(1)} ${c1[1].toFixed(1)} ${c2[0].toFixed(1)} ${c2[1].toFixed(1)} ${c[0]} ${c[1]}`;
  }
  return d;
};
const Head = ({ t, col, op = 1 }: { t: P; col: string; op?: number }) => (
  <polygon points={`${t[0] - 11},${t[1] - 6.5} ${t[0]},${t[1]} ${t[0] - 11},${t[1] + 6.5}`} fill={col} opacity={op} />
);

const Wire = ({ id, pts, col, w = 3, fade, head }: { id?: string; pts: P[]; col: string; w?: number; fade?: [number, number][]; head?: P }) => {
  const d = smooth(pts);
  const a = pts[0], b = pts[pts.length - 1];
  return (
    <g>
      {fade && id && (
        <linearGradient id={id} gradientUnits="userSpaceOnUse" x1={a[0]} y1={a[1]} x2={b[0]} y2={b[1]}>
          {fade.map(([o, v], i) => <stop key={i} offset={o} stopColor={col} stopOpacity={v} />)}
        </linearGradient>
      )}
      {!fade && <path d={d} fill="none" stroke="#000" strokeOpacity=".3" strokeWidth={w + 2} transform="translate(0 1)" />}
      <path d={d} fill="none" stroke={fade && id ? `url(#${id})` : col} strokeWidth={w} strokeLinecap="round" />
      {head && <Head t={head} col={col} />}
    </g>
  );
};

const Short = ({ x0, x1, y, col, w = 4 }: { x0: number; x1: number; y: number; col: string; w?: number }) => (
  <Wire pts={[[x0, y], [x1 - 6, y]]} col={col} w={w} head={[x1, y]} />
);

const Wires = () => (
  <svg width="3178" height="1276" className="pointer-events-none absolute left-0 top-0">
    {/* faded long cables */}
    <Wire id="f1" col={PUR} pts={[[607, 373], [680, 355], [790, 320], [852, 300], [950, 277], [1022, 266]]} fade={[[0, 0.4], [0.2, 0.16], [0.75, 0.18], [1, 0.7]]} head={[1027, 266]} />
    <Wire id="f2" col={YEL} pts={[[1327, 266], [1345, 271], [1370, 290], [1446, 367], [1510, 440], [1574, 520], [1606, 557], [1644, 582], [1668, 590]]} fade={[[0, 1], [0.12, 0.28], [0.65, 0.28], [1, 0.8]]} head={[1675, 590]} />
    <Wire id="f3" col={YEL} pts={[[1363, 1024], [1395, 1037], [1459, 1067], [1523, 1092], [1587, 1115], [1638, 1127], [1668, 1131]]} fade={[[0, 0.75], [0.2, 0.38], [0.7, 0.32], [1, 0.85]]} head={[1675, 1131]} />
    <Wire id="f4" col={RED} pts={[[2294, 590], [2320, 597], [2343, 633], [2366, 730], [2394, 793], [2422, 806]]} fade={[[0, 1], [0.15, 0.32], [0.7, 0.35], [1, 0.9]]} head={[2430, 806]} />
    <Wire id="f5" col={GRN} w={3} pts={[[2012, 484], [2039, 520], [2128, 610], [2244, 747], [2316, 837], [2387, 900], [2422, 914]]} fade={[[0, 0.45], [0.12, 0.24], [0.8, 0.2], [1, 0.9]]} head={[2431, 914]} />
    <Wire id="f6" col={RED} w={3} pts={[[2508, 482], [2526, 493], [2526, 533], [2486, 617], [2396, 667], [2262, 697], [2128, 708], [2039, 697], [1995, 667], [1970, 620], [1978, 596], [1988, 590]]} fade={[[0, 1], [0.12, 1], [0.3, 0.22], [0.6, 0.22], [0.75, 1], [1, 1]]} head={[1998, 590]} />
    {/* purple */}
    <Wire col={PUR} pts={[[352, 482], [372, 478], [378, 457], [368, 425], [350, 396], [354, 380], [370, 374]]} head={[379, 374]} />
    <Short x0={355} x1={379} y={482} col={PUR} />
    <Wire col={PUR} pts={[[352, 482], [372, 490], [393, 521], [444, 632], [546, 860], [580, 938], [613, 1015], [663, 1103], [695, 1129]]} head={[703, 1131]} />
    <Short x0={571} x1={595} y={374} col={PUR} />
    <Short x0={571} x1={595} y={482} col={PUR} />
    <Wire col={PUR} pts={[[895, 1130], [927, 1110], [957, 1071], [980, 1036], [1005, 1024], [1020, 1022]]} head={[1028, 1022]} />
    {/* orange */}
    <Short x0={895} x1={919} y={482} col={ORG} />
    <Wire col={ORG} pts={[[895, 698], [912, 690], [918, 657], [903, 603], [890, 557], [896, 530], [910, 518]]} head={[919, 518]} />
    <Short x0={1004} x1={1027} y={482} col={RED} />
    <Wire col={ORG} pts={[[1326, 483], [1342, 490], [1349, 515], [1338, 550], [1322, 567], [1328, 582], [1343, 590]]} head={[1351, 590]} />
    {/* shorts */}
    <Short x0={1651} x1={1675} y={482} col={RED} />
    <Short x0={1651} x1={1675} y={1022} col={RED} />
    <Short x0={1975} x1={1999} y={482} col={GRN} />
    <Short x0={1975} x1={1999} y={1022} col={GRN} />
    <Short x0={2192} x1={2215} y={374} col={RED} />
    <Short x0={2407} x1={2431} y={482} col={RED} />
    <Short x0={2515} x1={2539} y={482} col={RED} />
    <Short x0={2191} x1={2215} y={1022} col={RED} />
    <Wire col={YEL} w={4} pts={[[1327, 1022], [1352, 1022]]} />
    <Wire id="f7" col={CYA} w={4} pts={[[1867, 698], [1992, 698]]} fade={[[0, 1], [0.55, 0.35], [1, 1]]} head={[2000, 698]} />
    {/* green / blue */}
    <Wire col={GRN} pts={[[2080, 447], [2097, 451], [2104, 465], [2097, 479], [2084, 483], [2039, 483], [1995, 470], [1975, 440], [1967, 407], [1976, 385], [1990, 374]]} head={[1999, 374]} />
    <Wire col={BLU} pts={[[2080, 471], [2094, 473], [2091, 480], [2098, 483]]} w={3.5} head={[2107, 483]} />
    {/* red */}
    <Wire col={RED} pts={[[2295, 483], [2310, 483], [2295, 472], [2292, 460], [2301, 451], [2315, 447]]} head={[2323, 447]} />
    <Wire col={RED} pts={[[2295, 483], [2311, 480], [2303, 475], [2312, 471]]} head={[2323, 470]} />
    <Wire col={RED} pts={[[2404, 374], [2420, 382], [2428, 407], [2402, 467], [2352, 483], [2310, 483], [2296, 482]]} />
    <Wire col={RED} w={3.5} pts={[[2511, 482], [2527, 485], [2536, 520], [2527, 580], [2500, 647], [2460, 683], [2402, 703]]} />
    <Head t={[2432, 698]} col={RED} />
    <Wire col={RED} w={3.5} pts={[[2511, 482], [2518, 495], [2512, 523], [2520, 570], [2547, 623], [2587, 667], [2643, 703]]} />
    <polygon points="2617,698 2640,698 2640,704" fill={RED} />
  </svg>
);

/* ---------------- data ---------------- */
const NOTES0: N[] = [
  { c: 7, r: 2, s: "lo" }, { c: 2, r: 3, s: "mid" }, { c: 4, r: 4, s: "w" }, { c: 3, r: 6, s: "lo" },
  { c: 6, r: 8, s: "mid" }, { c: 0, r: 12, s: "hi" }, { c: 5, r: 12, s: "mid" }, { c: 1, r: 23, s: "mid" },
];
const NOTES1: N[] = [
  { c: 7, r: 14, s: "lo" }, { c: 2, r: 15, s: "mid" }, { c: 4, r: 16, s: "hi" }, { c: 3, r: 18, s: "lo" },
  { c: 6, r: 20, s: "w" }, { c: 0, r: 24, s: "hi" }, { c: 5, r: 24, s: "hi" },
];
const STEPS_A: Step[] = [
  { f: "#ffffff" }, { b: "#cdb235" }, { b: "#b7a030" }, { f: "#ab952c" }, { b: "#d8bc36" }, { b: "#c5ab33" }, { f: "#c7ae36" }, { b: "#7a6b2a" },
];
const STEPS_B: Step[] = [
  { f: "#ffdd3c" }, { b: "#bca232" }, { b: "#bca232" }, { b: "#8d7c2c" }, { b: "#e8e8e8" }, { b: "#bca232" }, { b: "#a08c2e" }, { b: "#8d7c2c" },
];

export default function App() {
  return (
    <div className="relative h-[1276px] w-[3178px] overflow-hidden bg-[#0b0b0b] bg-[linear-gradient(to_right,#151515_3px,transparent_3px),linear-gradient(to_bottom,#151515_3px,transparent_3px)] bg-[size:108px_108px] bg-[position:42px_103px] [font-family:Lato,sans-serif]">
      <svg width="0" height="0" className="absolute">
        <defs>
          <linearGradient id="kl" x1="0" y1="0" x2="0" y2="1">
            <stop offset="0" stopColor="#f2f2f2" />
            <stop offset="1" stopColor="#bcbcbc" />
          </linearGradient>
          <linearGradient id="kd" x1="0" y1="0" x2="0" y2="1">
            <stop offset="0" stopColor="#646464" />
            <stop offset="1" stopColor="#444444" />
          </linearGradient>
          <Grid id="gr" />
        </defs>
      </svg>

      <Node c={0} r={2} w={1} h={1} className="flex items-center">
        <div className="flex w-[72px] justify-center pl-[30px]"><Phi col={PUR} z={24} /></div>
        <PortCell k="purFill" />
      </Node>
      <Scaler c={1} r={1} ratio={<>0 : <span className="text-[#7a5020]">1</span></>} />
      <Scaler c={1} r={2} ratio="2 : 1" />
      <Scaler c={4} r={8} ratio="1 : 1" outline />
      <ModSeq />
      <NoteSeq c={3} r={2} label="0" phi="#b8b8b8" inPort="pur" notes={NOTES0} play={4} />
      <NoteSeq c={3} r={4} label="+1" phi={PUR} plus inPort="pur" notes={NOTES1} play={6} marker />
      <Select />
      <PitchQ />
      <StepSeq c={7} r={0} phi="#b8b8b8" inPort="pur" outPort="yelFill" steps={STEPS_A} />
      <StepSeq c={7} r={7} phi={PUR} plus inPort="purFill" outPort="yel" steps={STEPS_B} />
      <Osc r={2} title="Triangle" wave="M2 38L25 2L48 38" knobA={-5} knobB={-130} labelL="Skew" right="Fold" />
      <Osc
        r={7}
        title="Phase-1"
        sel
        wave="M2 6C14 6 16 37 25 37C34 37 36 6 48 6"
        knobA={-130}
        knobB={-135}
        labelL="Shape"
        mid={<span className={"text-[#7c2435] " + T}>F = 1</span>}
        right={
          <svg width="22" height="20" fill="none" stroke="#b5b5b5" strokeWidth="1.8" className="block">
            <path d="M3 13V2H19V13H10" /><path d="M14 8L9 13L14 18" />
          </svg>
        }
      />
      <Adsr
        r={2}
        knobs={[{ a: -110, t: -105 }, { a: -25, t: -25 }, { a: -60, t: -55 }, { a: -45, t: -45 }]}
        env={<Env line="M10 82L14 37L18 9" curve="M18 9C24 30 28 46 34 50C40 58 44 63 49.5 63M168 63L182 77L194 82" dash="M50 63H168" white={[49.5, 63]} pts={[[14, 37], [18, 9], [34, 50], [49.5, 63], [182, 77], [194, 82]]} />}
      />
      <Adsr
        r={7}
        knobs={[{ a: -105, t: -110 }, { a: -25, t: -25 }, { a: 0, t: 0 }, { a: 25, t: 25 }]}
        bPort="yel"
        env={<Env line="M10 82L14 37L19 9" curve="M19 9L35 36C40 42 45 45 50 45M168 45L185 70C190 76 205 80 218 82" dash="M50 45H168" white={[194, 73]} pts={[[14, 37], [19, 9], [35, 36], [50, 45], [190, 72], [218, 82]]} />}
      />
      <AllPass c={16} r={1} inP="redMid" />
      <AllPass c={18} r={1} inP="red" outP="redMid" />
      <AllPass c={20} r={1} inP="red" />
      <Split />
      <AllPass c={17} r={2} inP="red" outP="redMid" />
      <Merge />
      <LowPass />
      <Out c={21} r={2} />
      <ModDelay />
      <Lfo />
      <Mixer3 />
      <Mixer1 />
      <Out c={18} r={7} />
      <Wires />
    </div>
  );
}
